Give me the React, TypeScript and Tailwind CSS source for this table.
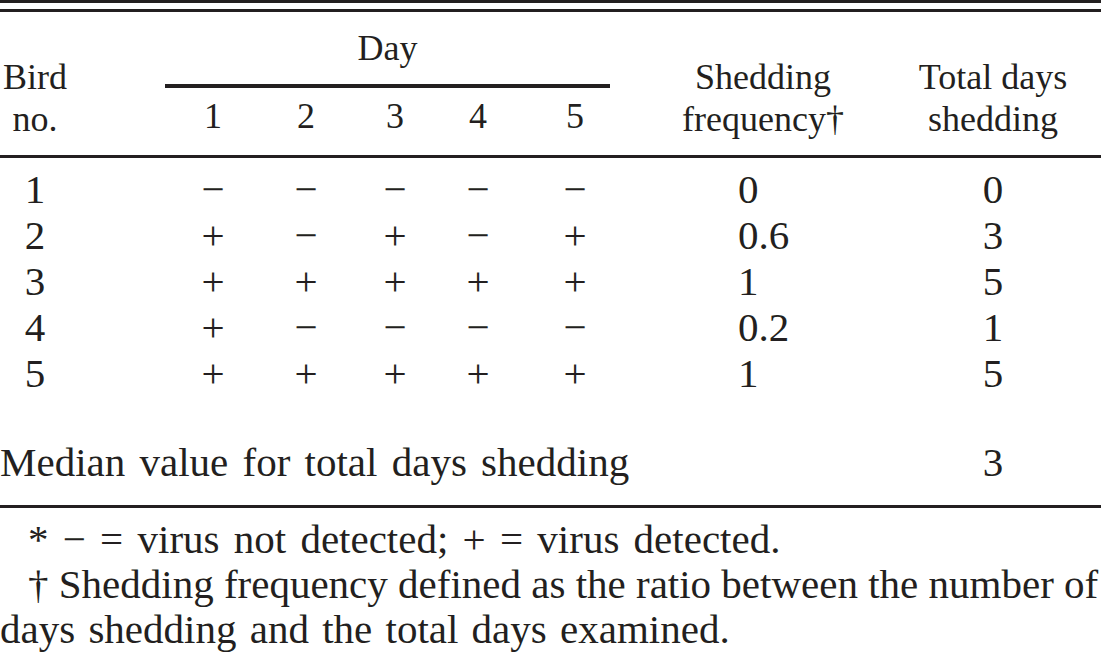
import React from 'react';

const COLS = 'grid grid-cols-[70px_95px_96px_90px_88px_78px_116px_260px_200px]';

const ROWS: { bird: string; days: string[]; freq: string; total: string }[] = [
  { bird: '1', days: ['−', '−', '−', '−', '−'], freq: '0', total: '0' },
  { bird: '2', days: ['+', '−', '+', '−', '+'], freq: '0.6', total: '3' },
  { bird: '3', days: ['+', '+', '+', '+', '+'], freq: '1', total: '5' },
  { bird: '4', days: ['+', '−', '−', '−', '−'], freq: '0.2', total: '1' },
  { bird: '5', days: ['+', '+', '+', '+', '+'], freq: '1', total: '5' },
];

const Rule: React.FC<{ className?: string }> = ({ className = '' }) => (
  <div className={`h-[3px] bg-[#231f20] ${className}`} />
);

const App: React.FC = () => {
  return (
    <div className="w-[1101px] h-[653px] overflow-hidden bg-white text-[#231f20] [font-family:'Liberation_Serif','Times_New_Roman',serif]">
      <Rule />
      <Rule className="mt-[6px]" />

      {/* header */}
      <div className={`${COLS} h-[143px] items-end pb-[15px] text-[36px] leading-[42px]`}>
        <div className="text-center">
          <div>Bird</div>
          <div>no.</div>
        </div>
        <div className="col-start-3 col-span-5 mb-[3px] flex flex-col">
          <div className="w-[445px] text-center">Day</div>
          <div className="w-[445px] h-[4px] mt-[15px] mb-[7px] bg-[#231f20]" />
          <div className="grid grid-cols-[96px_90px_88px_78px_116px] text-center">
            {['1', '2', '3', '4', '5'].map(d => (
              <div key={d}>{d}</div>
            ))}
          </div>
        </div>
        <div className="text-center">
          <div>Shedding</div>
          <div>frequency†</div>
        </div>
        <div className="text-center">
          <div>Total days</div>
          <div>shedding</div>
        </div>
      </div>
      <Rule />

      {/* body */}
      <div className="pt-[8px] text-[41px] leading-[46px]">
        {ROWS.map(row => (
          <div key={row.bird} className={COLS}>
            <div className="text-center">{row.bird}</div>
            <div />
            {row.days.map((d, i) => (
              <div key={i} className="text-center">{d}</div>
            ))}
            <div className="pl-[105px]">{row.freq}</div>
            <div className="text-center">{row.total}</div>
          </div>
        ))}
        <div className={`${COLS} mt-[43px]`}>
          <div className="col-span-8 whitespace-nowrap [word-spacing:4px]">Median value for total days shedding</div>
          <div className="text-center">3</div>
        </div>
      </div>
      <Rule className="mt-[20px]" />

      {/* footnotes */}
      <div className="mt-[9px] text-[41px] leading-[45px] whitespace-nowrap">
        <div className="pl-[28px] [word-spacing:4px]">* − = virus not detected; + = virus detected.</div>
        <div className="pl-[28px]">† Shedding frequency defined as the ratio between the number of</div>
        <div className="[word-spacing:3px]">days shedding and the total days examined.</div>
      </div>
    </div>
  );
};

export default App;
